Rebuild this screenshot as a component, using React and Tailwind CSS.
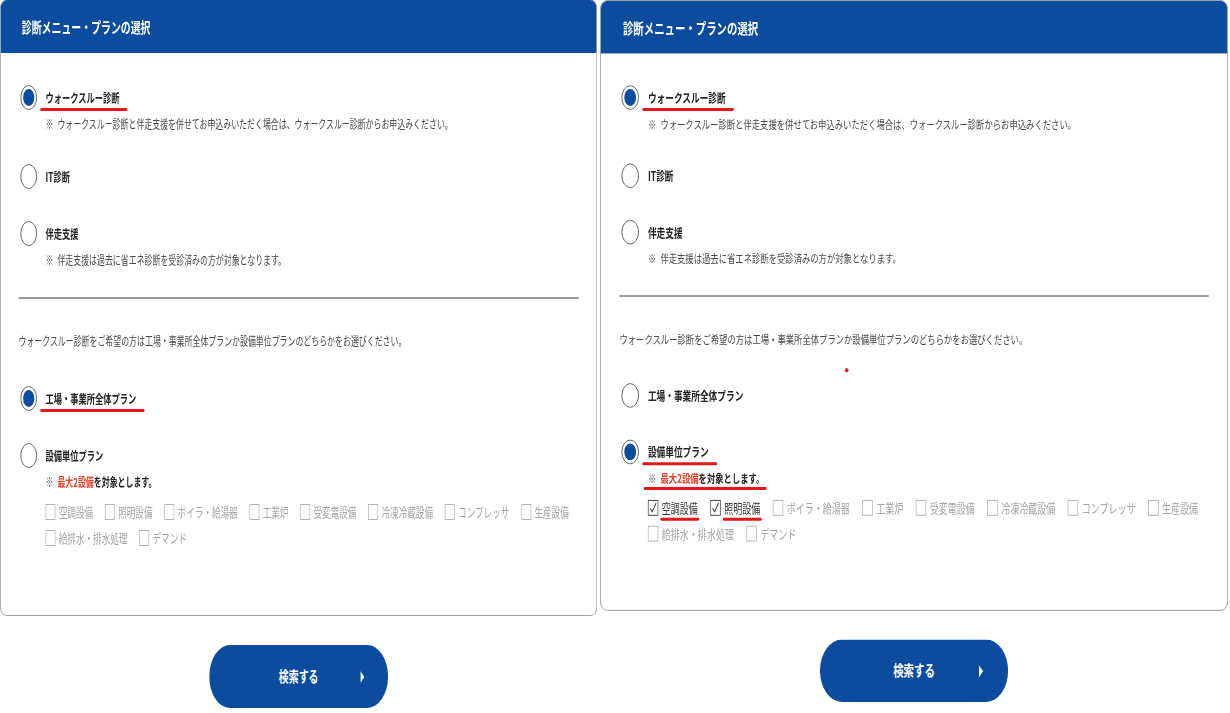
import clsx from "clsx";

const menus = [
  {
    id: "walk",
    label: "ウォークスルー診断",
    note: "ウォークスルー診断と伴走支援を併せてお申込みいただく場合は、ウォークスルー診断からお申込みください。",
  },
  { id: "it", label: "IT診断" },
  {
    id: "support",
    label: "伴走支援",
    note: "伴走支援は過去に省エネ診断を受診済みの方が対象となります。",
  },
];

const equipments = [
  "空調設備",
  "照明設備",
  "ボイラ・給湯器",
  "工業炉",
  "受変電設備",
  "冷凍冷蔵設備",
  "コンプレッサ",
  "生産設備",
  "給排水・排水処理",
  "デマンド",
];

// red marker line drawn under a highlighted label
const Marked = ({ on, line, className, children }) => (
  <span className={clsx("relative inline-block", className)}>
    {children}
    {on && (
      <span
        className={clsx(
          "absolute -bottom-[4px] h-[3px] rounded-full bg-[#e3171c]",
          line
        )}
      />
    )}
  </span>
);

const Radio = ({ checked }) => (
  <span className="flex h-[25px] w-[25px] shrink-0 items-center justify-center rounded-full border-[1.5px] border-[#4a4a4a] bg-white">
    {checked && <span className="h-[17px] w-[17px] rounded-full bg-[#0b4c9e]" />}
  </span>
);

const Option = ({ label, checked, marked, children }) => (
  <div>
    <div className="flex h-[25px] items-center gap-[13px] pl-[3px]">
      <Radio checked={checked} />
      <Marked
        on={marked}
        line="-left-[8px] -right-[12px]"
        className="text-[12.5px] font-bold leading-[18px] text-[#222]"
      >
        {label}
      </Marked>
    </div>
    {children && <div className="mt-[6px] pl-[41px]">{children}</div>}
  </div>
);

const Note = ({ children }) => (
  <p className="text-[12px] leading-4 text-[#4a4a4a]">
    <span className="mr-[6px]">※</span>
    {children}
  </p>
);

const Check = ({ label, checked }) => (
  <label className="flex h-[26px] items-center gap-[5px]">
    <span
      className={clsx(
        "flex h-[16px] w-[15px] shrink-0 items-center justify-center border bg-white",
        checked ? "border-[#444]" : "border-[#b3b3b3]"
      )}
    >
      {checked && (
        <svg viewBox="0 0 15 16" className="h-[14px] w-[13px]" fill="none">
          <path d="M2.5 8.5l3.5 4 6.5-10" stroke="#333" strokeWidth="1.4" />
        </svg>
      )}
    </span>
    <Marked
      on={checked}
      line="-left-[2px] -right-[2px]"
      className={clsx(
        "text-[13px] leading-[18px]",
        checked ? "text-[#333]" : "text-[#a5a5a5]"
      )}
    >
      {label}
    </Marked>
  </label>
);

const Panel = ({ plan, checked, dot }) => (
  <section className="relative overflow-hidden rounded-[10px] border border-[#8c8c8c] bg-white">
    <header className="flex h-[53px] items-center bg-[#0b4c9e] px-[32px] pt-[2px]">
      <h2 className="text-[15px] font-bold text-white">診断メニュー・プランの選択</h2>
    </header>

    {dot && <span className="absolute left-[352px] top-[371px] h-[4px] w-[5px] rounded-full bg-[#e3171c]" />}

    <div className="px-[27px] pb-[64px] pt-[32px]">
      <div className="flex flex-col gap-[32px]">
        {menus.map((m) => (
          <Option key={m.id} label={m.label} checked={m.id === "walk"} marked={m.id === "walk"}>
            {m.note && <Note>{m.note}</Note>}
          </Option>
        ))}
      </div>

      <div className="mt-[29px] h-[2px] bg-[#9b9b9b]" />

      <p className="mt-[34px] text-[12px] leading-4 text-[#4a4a4a]">
        ウォークスルー診断をご希望の方は工場・事業所全体プランか設備単位プランのどちらかをお選びください。
      </p>

      <div className="mt-[37px] flex flex-col gap-[32px]">
        <Option label="工場・事業所全体プラン" checked={plan === "all"} marked={plan === "all"} />
        <Option label="設備単位プラン" checked={plan === "unit"} marked={plan === "unit"}>
          <div className="flex">
            <Marked on={plan === "unit"} line="-left-[6px] -right-[3px]" className="text-[12px] leading-4">
              <span className="mr-[6px] text-[#4a4a4a]">※</span>
              <span className="font-bold text-[#e8412c]">最大2設備</span>
              <span className="font-bold text-[#222]">を対象とします。</span>
            </Marked>
          </div>
          <div className="mt-[9px] flex flex-wrap gap-x-[18px]">
            {equipments.map((e) => (
              <Check key={e} label={e} checked={checked.includes(e)} />
            ))}
          </div>
        </Option>
      </div>
    </div>
  </section>
);

const SearchButton = () => (
  <button className="relative mx-auto mt-[29px] flex h-[63px] w-[271px] items-center justify-center rounded-full bg-[#0b4c9e]">
    <span className="text-[15px] font-bold text-white">検索する</span>
    <svg viewBox="0 0 6 12" className="absolute right-[36px] h-[12px] w-[6px]">
      <path d="M0 0L6 6L0 12Z" fill="#fff" />
    </svg>
  </button>
);

export default function App() {
  return (
    <div
      className="flex h-[713px] w-[1230px] gap-[2px] overflow-hidden bg-white"
      style={{ fontFamily: '"Noto Sans CJK JP", "Noto Sans", sans-serif' }}
    >
      <div className="-mt-px w-[598px] shrink-0">
        <div className="w-[905px] origin-top-left scale-x-[0.66]">
          <Panel plan="all" checked={[]} />
          <SearchButton />
        </div>
      </div>
      <div className="w-[630px] shrink-0">
        <div className="w-[905px] origin-top-left scale-x-[0.694] scale-y-[0.99]">
          <Panel plan="unit" checked={["空調設備", "照明設備"]} dot />
          <SearchButton />
        </div>
      </div>
    </div>
  );
}
